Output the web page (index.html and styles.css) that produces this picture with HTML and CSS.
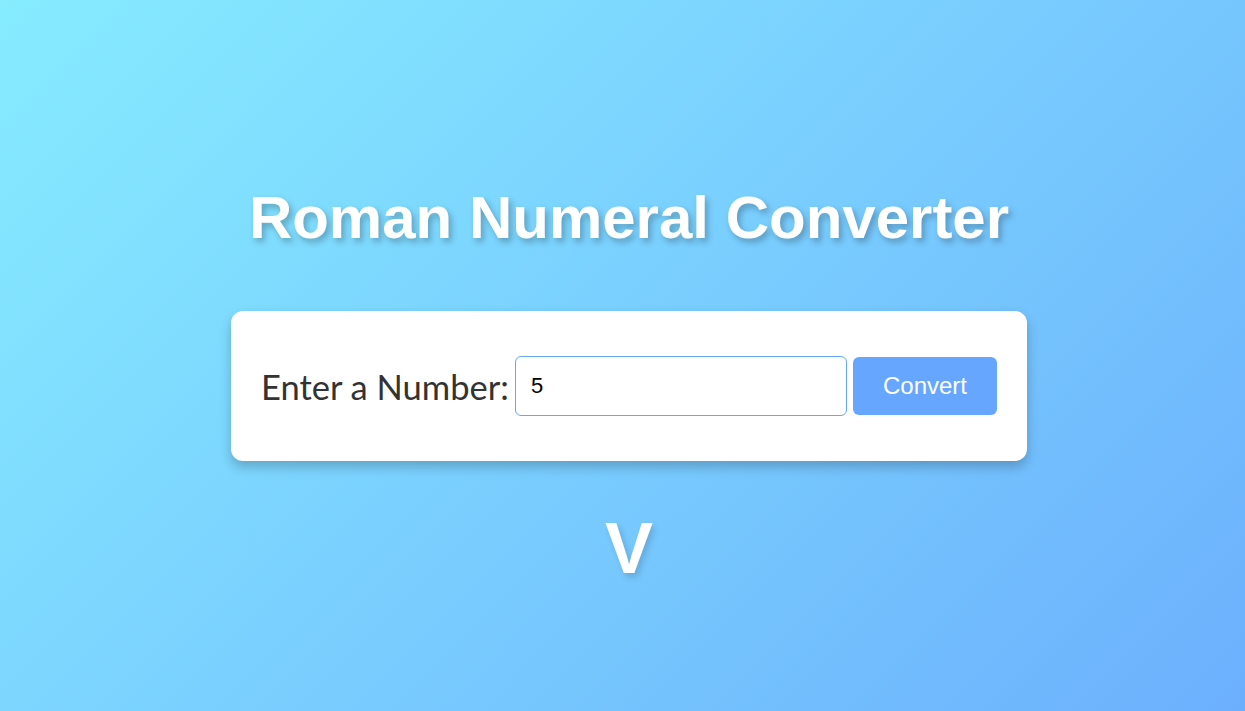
FILE: index.html
```html
<!DOCTYPE html>
<html lang="en">
<head>
<meta charset="utf-8">
<title>Roman Numeral Converter</title>
<link rel="stylesheet" href="styles.css">
</head>
<body>
<main class="page">
  <h1 class="title">Roman Numeral Converter</h1>
  <form class="card">
    <label class="label" for="number">Enter a Number:</label>
    <input class="input" id="number" type="number" value="5">
    <button class="btn" type="button">Convert</button>
  </form>
  <div class="output">V</div>
</main>
</body>
</html>
```

FILE: styles.css
```css
html, body {
  margin: 0;
  padding: 0;
  height: 100%;
}
body {
  background: linear-gradient(135deg, #86ecff 0%, #6cb0fd 100%);
  font-family: "Liberation Sans", Arial, sans-serif;
}
.page {
  display: flex;
  flex-direction: column;
  align-items: center;
  padding-top: 183px;
  padding-left: 13px;
}
.title {
  margin: 0;
  font-size: 60px;
  font-weight: bold;
  color: #fff;
  line-height: normal;
  text-shadow: 3px 4px 6px rgba(0, 0, 0, 0.25);
}
.card {
  margin-top: 59px;
  box-sizing: border-box;
  width: 796px;
  height: 150px;
  background: #fff;
  border-radius: 12px;
  box-shadow: 0 6px 12px rgba(0, 0, 0, 0.22);
  display: flex;
  align-items: center;
  padding: 0 30px;
  gap: 7px;
}
.label {
  flex: 1 1 0;
  min-width: 0;
  white-space: nowrap;
  font-family: Lato, "Open Sans", sans-serif;
  font-size: 34.5px;
  color: #333;
}
.input {
  flex: 0 0 332px;
  box-sizing: border-box;
  width: 332px;
  height: 60px;
  border: 1px solid #66a6ff;
  border-radius: 6px;
  padding: 0 15px;
  font-family: "Liberation Sans", Arial, sans-serif;
  font-size: 22px;
  color: #000;
  outline: none;
  -moz-appearance: textfield;
}
.input::-webkit-outer-spin-button,
.input::-webkit-inner-spin-button {
  -webkit-appearance: none;
  margin: 0;
}
.btn {
  flex: 0 0 144px;
  box-sizing: border-box;
  width: 144px;
  height: 58px;
  margin-left: -1px;
  border: none;
  border-radius: 6px;
  background: #66a6ff;
  color: #fff;
  font-family: "Liberation Sans", Arial, sans-serif;
  font-size: 24px;
}
.output {
  margin-top: 46px;
  font-size: 72px;
  font-weight: bold;
  color: #fff;
  line-height: normal;
  text-shadow: 3px 4px 6px rgba(0, 0, 0, 0.15);
}
```
